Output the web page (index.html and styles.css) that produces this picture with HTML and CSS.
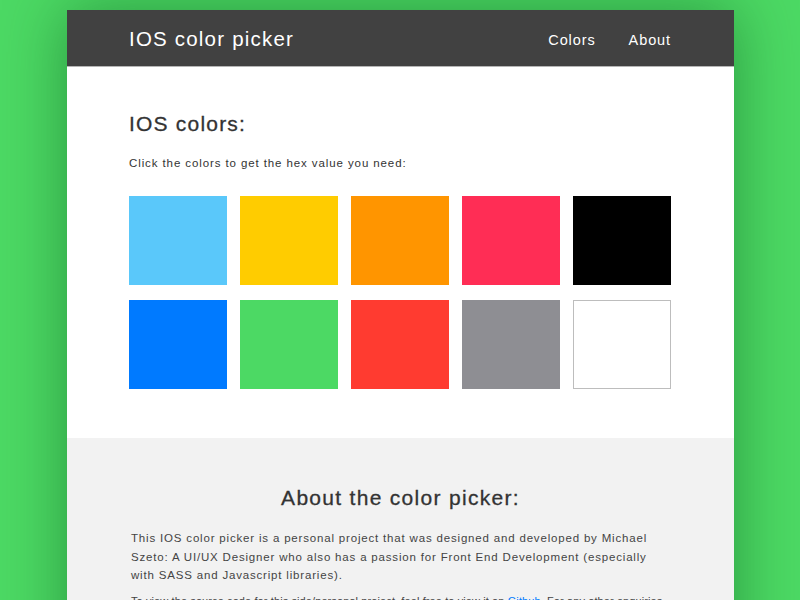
FILE: index.html
```html
<!DOCTYPE html>
<html>
<head>
<meta charset="utf-8">
<link rel="stylesheet" href="styles.css">
</head>
<body>
<div class="card">
  <header class="topbar">
    <div class="brand">IOS color picker</div>
    <nav class="nav">
      <a href="#colors">Colors</a>
      <a href="#about">About</a>
    </nav>
  </header>
  <section class="colors" id="colors">
    <h1>IOS colors:</h1>
    <p class="lead">Click the colors to get the hex value you need:</p>
    <div class="grid">
      <div class="sw sw-teal"></div>
      <div class="sw sw-yellow"></div>
      <div class="sw sw-orange"></div>
      <div class="sw sw-pink"></div>
      <div class="sw sw-black"></div>
      <div class="sw sw-blue"></div>
      <div class="sw sw-green"></div>
      <div class="sw sw-red"></div>
      <div class="sw sw-gray"></div>
      <div class="sw sw-white"></div>
    </div>
  </section>
  <section class="about" id="about">
    <h2>About the color picker:</h2>
    <p>This IOS color picker is a personal project that was designed and developed by Michael Szeto: A UI/UX Designer who also has a passion for Front End Development (especially with SASS and Javascript libraries).</p>
    <p class="small">To view the source code for this side/personal project, feel free to view it on <a href="#">Github</a>. For any other enquiries please feel free to get in touch.</p>
  </section>
</div>
</body>
</html>
```
FILE: styles.css
```css
html, body {
  margin: 0;
  padding: 0;
}
body {
  background: #4cd964;
  font-family: "Liberation Sans", Arial, sans-serif;
  overflow: hidden;
  height: 600px;
}
.card {
  width: 667px;
  margin: 10px 0 0 67px;
  background: #fff;
  box-shadow: 0 0 60px rgba(0, 70, 20, 0.45);
}
.topbar {
  height: 56px;
  background: #414141;
  border-bottom: 1px solid #b5b5b5;
  display: flex;
  align-items: center;
  justify-content: space-between;
  padding: 0 63px 0 62px;
}
.brand {
  color: #fff;
  font-size: 20.5px;
  letter-spacing: 1.2px;
  margin-top: 1px;
}
.nav {
  display: flex;
  gap: 33px;
  margin-top: 4px;
}
.nav a {
  color: #fff;
  text-decoration: none;
  font-size: 14.5px;
  letter-spacing: 0.9px;
}
.colors {
  padding: 45px 63px 49px 62px;
}
.colors h1 {
  margin: 0;
  font-size: 21px;
  font-weight: normal;
  color: #333;
  letter-spacing: 1.2px;
  -webkit-text-stroke: 0.3px #333;
}
.lead {
  margin: 21px 0 27px;
  font-size: 11.5px;
  color: #333;
  letter-spacing: 0.9px;
}
.grid {
  display: grid;
  grid-template-columns: repeat(5, 98px);
  column-gap: 13px;
  row-gap: 15px;
}
.sw {
  height: 89px;
  box-sizing: border-box;
}
.sw-teal { background: #5ac8fa; }
.sw-yellow { background: #ffcc00; }
.sw-orange { background: #ff9500; }
.sw-pink { background: #ff2d55; }
.sw-black { background: #000; }
.sw-blue { background: #007aff; }
.sw-green { background: #4cd964; }
.sw-red { background: #ff3b30; }
.sw-gray { background: #8e8e93; }
.sw-white { background: #fff; border: 1px solid #bdbdbd; }
.about {
  background: #f2f2f2;
  padding: 48px 64px 40px 64px;
  color: #444;
}
.about h2 {
  margin: 0 0 19px;
  text-align: center;
  font-size: 21px;
  font-weight: normal;
  color: #333;
  letter-spacing: 1.3px;
  -webkit-text-stroke: 0.3px #333;
}
.about p {
  margin: 0 0 7px;
  font-size: 11.5px;
  line-height: 18.5px;
  letter-spacing: 0.82px;
}
.about p.small {
  font-size: 11px;
  letter-spacing: 0.1px;
}
.about a {
  color: #007aff;
  text-decoration: none;
}
```
